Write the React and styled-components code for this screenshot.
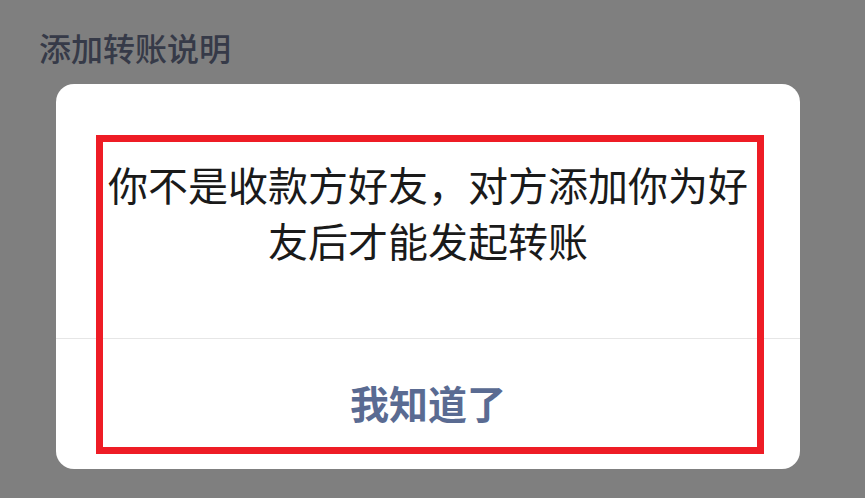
import React from "react";
import styled, { createGlobalStyle } from "styled-components";

const GlobalStyle = createGlobalStyle`
  html, body {
    margin: 0;
    padding: 0;
    background: #7f7f7f;
  }
  body {
    font-family: "Noto Sans CJK SC", "Noto Sans", sans-serif;
  }
`;

const Page = styled.div`
  width: 865px;
  height: 498px;
  overflow: hidden;
  background: #7f7f7f;
  display: flex;
  flex-direction: column;
`;

const Title = styled.div`
  margin: 27px 0 0 39px;
  font-size: 32px;
  font-weight: 500;
  line-height: 40px;
  color: #363a48;
`;

const Dialog = styled.div`
  position: relative;
  margin: 17px 0 0 56px;
  width: 744px;
  height: 385px;
  background: #ffffff;
  border-radius: 18px;
  display: flex;
  flex-direction: column;
`;

const Message = styled.div`
  height: 255px;
  box-sizing: border-box;
  padding: 72px 50px 0;
  text-align: center;
  font-size: 40px;
  line-height: 56px;
  color: #1a1a1a;
  border-bottom: 1px solid #e6e6e6;
`;

const Action = styled.button`
  flex: 1;
  border: none;
  background: transparent;
  font-family: inherit;
  font-size: 39px;
  font-weight: 700;
  color: #5a6b92;
  display: flex;
  align-items: center;
  justify-content: center;
  padding: 0 0 4px;
`;

const Highlight = styled.div`
  position: absolute;
  left: 40px;
  top: 51px;
  width: 668px;
  height: 319px;
  box-sizing: border-box;
  border: 7px solid #ee1c25;
  pointer-events: none;
`;

export default function App() {
  return (
    <Page>
      <GlobalStyle />
      <Title>添加转账说明</Title>
      <Dialog>
        <Message>你不是收款方好友，对方添加你为好友后才能发起转账</Message>
        <Action>我知道了</Action>
        <Highlight />
      </Dialog>
    </Page>
  );
}
